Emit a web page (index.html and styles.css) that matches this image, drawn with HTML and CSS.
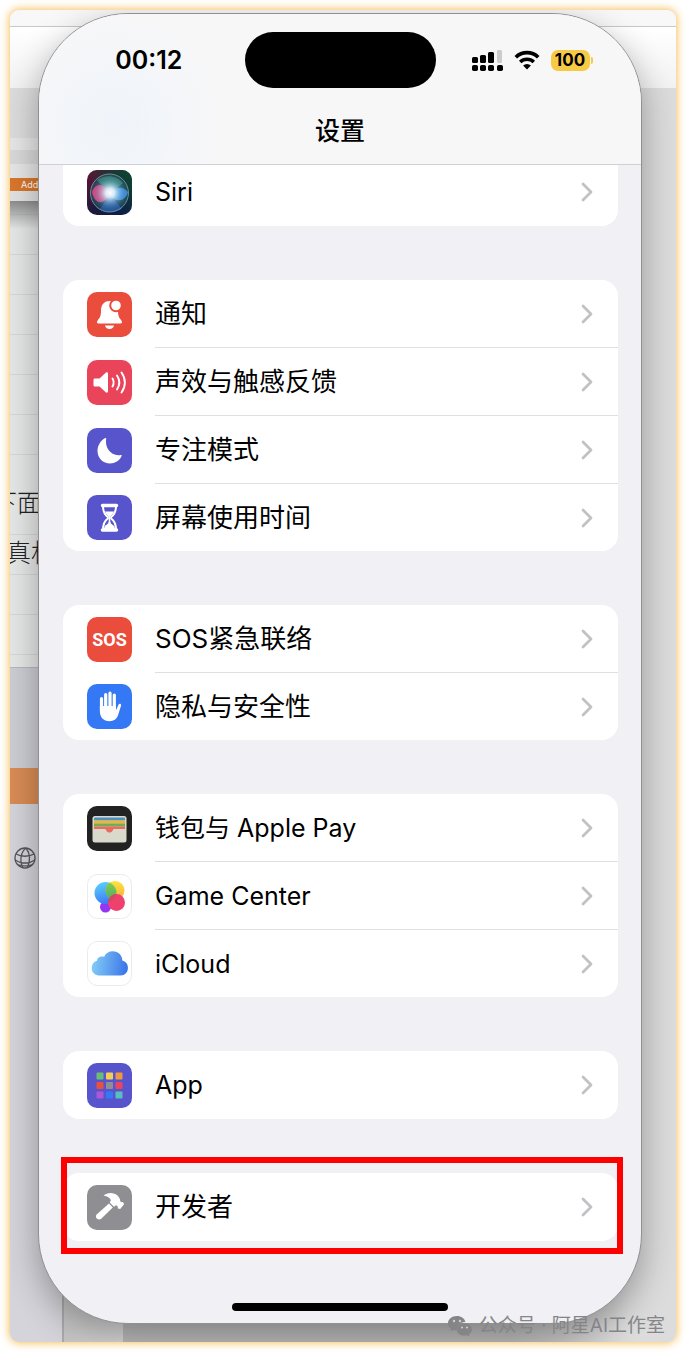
FILE: index.html
```html
<!DOCTYPE html>
<html lang="zh-CN">
<head>
    <meta charset="UTF-8">
    <meta name="viewport" content="width=device-width, initial-scale=1.0">
    <title>设置</title>
    <link rel="stylesheet" href="styles.css">
</head>
<body>
    <svg class="defs" width="0" height="0" aria-hidden="true">
        <defs>
            <radialGradient id="siri-glow" cx="50%" cy="52%" r="50%">
                <stop offset="0" stop-color="#fff"/>
                <stop offset=".25" stop-color="#e6f6ff" stop-opacity=".9"/>
                <stop offset=".55" stop-color="#a4d8ee" stop-opacity=".45"/>
                <stop offset="1" stop-color="#3c7a90" stop-opacity="0"/>
            </radialGradient>
            <linearGradient id="siri-bg" x1="0" y1="0" x2="1" y2="1">
                <stop offset="0" stop-color="#6a1233"/>
                <stop offset=".5" stop-color="#1c1a3c"/>
                <stop offset="1" stop-color="#0b1f4c"/>
            </linearGradient>
            <linearGradient id="siri-green" x1="1" y1="0" x2="0" y2="1">
                <stop offset="0" stop-color="#0c4a30"/>
                <stop offset=".6" stop-color="#0c4a30" stop-opacity="0"/>
            </linearGradient>
            <linearGradient id="gc-blue" x1="0" y1="0" x2=".3" y2="1">
                <stop offset="0" stop-color="#5ed8fa"/>
                <stop offset="1" stop-color="#3d7cf8"/>
            </linearGradient>
            <linearGradient id="gc-yellow" x1="0" y1="0" x2="0" y2="1">
                <stop offset="0" stop-color="#fbe638"/>
                <stop offset="1" stop-color="#f5a94a"/>
            </linearGradient>
            <linearGradient id="gc-green" x1="0" y1="0" x2="0" y2="1">
                <stop offset="0" stop-color="#86d048"/>
                <stop offset="1" stop-color="#4fae68"/>
            </linearGradient>
            <linearGradient id="cloud" x1="0" y1=".5" x2="1" y2=".6">
                <stop offset="0" stop-color="#83cdf6"/>
                <stop offset="1" stop-color="#3a74e8"/>
            </linearGradient>
            <clipPath id="gc-clip"><circle cx="18.500" cy="19" r="11"/></clipPath>
        </defs>
        <symbol id="chevron" viewBox="0 0 12 20">
            <path d="M2 2l8 8-8 8" fill="none" stroke="#c2c2c5" stroke-width="2.800" stroke-linecap="round" stroke-linejoin="round"/>
        </symbol>
    </svg>

    <div class="shot">
        <div class="desk">
            <div class="desk-titlebar"></div>
            <div class="desk-toolbar"></div>
            <div class="desk-tabs"></div>
            <div class="desk-add">Add</div>
            <div class="desk-edge"></div>
            <div class="desk-page">
                <p>下面</p>
                <p>真机</p>
            </div>
            <div class="desk-panel"></div>
            <div class="desk-orange"></div>
            <div class="desk-panel desk-panel-last">
                <svg width="22" height="22" viewBox="0 0 22 22" fill="none" stroke="#57575b" stroke-width="1.300" aria-hidden="true">
                    <circle cx="11" cy="11" r="10"/>
                    <path d="M12 1C7 5 5 13 9 21M12 1c4 5 5 13 1 20M2 7c5 3 13 3 18 0M1 13c6 4 14 4 20 0M4 18c4 1 10 1 14 0"/>
                </svg>
            </div>
        </div>

        <main class="phone">
            <header class="top">
                <div class="status">
                    <time class="clock">00:12</time>
                    <div class="island"></div>
                    <div class="signals">
                        <svg width="31" height="21" viewBox="0 0 31 21" aria-label="信号">
                            <g fill="#000">
                                <rect x="0" y="7" width="6" height="6" rx="1.500"/>
                                <rect x="8" y="5" width="6" height="8" rx="1.500"/>
                                <rect x="16" y="2" width="6" height="11" rx="1.500"/>
                                <rect x="0" y="15" width="6" height="6" rx="1.800"/>
                                <rect x="8" y="15" width="6" height="6" rx="1.800"/>
                                <rect x="16" y="15" width="6" height="6" rx="1.800"/>
                                <rect x="25" y="15" width="6" height="6" rx="1.800"/>
                            </g>
                            <rect x="25" y="0" width="5" height="13" rx="1.500" fill="#ccc"/>
                        </svg>
                        <svg width="26" height="20" viewBox="0 0 26 20" aria-label="无线局域网">
                            <path d="M1.800 7.200a16 16 0 0 1 22.400 0" fill="none" stroke="#000" stroke-width="3.700"/>
                            <path d="M6.200 12a9.800 9.800 0 0 1 13.600 0" fill="none" stroke="#000" stroke-width="3.500"/>
                            <path d="M13 19.500l-3.900-4a5.600 5.600 0 0 1 7.800 0z"/>
                        </svg>
                        <span class="battery">100</span>
                    </div>
                </div>
                <h1>设置</h1>
            </header>

            <nav class="list">
                <div class="card card-under">
                    <a class="row" href="#siri">
                        <svg class="icon" viewBox="0 0 45 45" aria-hidden="true">
                            <rect width="45" height="45" rx="10" fill="url(#siri-bg)"/>
                            <rect width="45" height="45" rx="10" fill="url(#siri-green)"/>
                            <circle cx="22.500" cy="23" r="19" fill="#28596e" opacity=".6"/>
                            <path d="M10 10c8-6 20-5 26 3L23 24z" fill="#3e9b85" opacity=".6"/>
                            <path d="M23 24l12 15c-8 4-16 4-22 0z" fill="#2c66c8" opacity=".6"/>
                            <path d="M23 24C18 12 8 13 5 22c2 12 12 14 18 2z" fill="#e84583" opacity=".9"/>
                            <path d="M22 24c6-8 14-8 19-2-2 9-12 12-19 2z" fill="#3f8fe8" opacity=".9"/>
                            <circle cx="23" cy="22" r="18" fill="url(#siri-glow)"/>
                            <circle cx="22.500" cy="23" r="19" fill="none" stroke="#7aa89e" stroke-width="1" opacity=".8"/>
                        </svg>
                        <span class="label">Siri</span>
                        <svg class="chevron" aria-hidden="true"><use href="#chevron"/></svg>
                    </a>
                </div>

                <div class="card">
                    <a class="row" href="#notifications">
                        <svg class="icon" viewBox="0 0 45 45" aria-hidden="true">
                            <rect width="45" height="45" rx="10" fill="#eb4d3d"/>
                            <path d="M22.500 9c-6 0-8.500 4.500-8.500 9.500 0 6.500-1.500 7.500-3.400 10-1.200 1.700-.6 3 1 3h21.800c1.600 0 2.200-1.300 1-3-1.900-2.500-3.400-3.500-3.400-10 0-5-2.500-9.500-8.500-9.500z" fill="#fff"/>
                            <path d="M18 33.500h9c-.5 2.300-2 3.500-4.500 3.500s-4-1.200-4.500-3.500z" fill="#fff"/>
                            <circle cx="29" cy="13.500" r="5.800" fill="#fff" stroke="#eb4d3d" stroke-width="2"/>
                        </svg>
                        <span class="label label-zh">通知</span>
                        <svg class="chevron" aria-hidden="true"><use href="#chevron"/></svg>
                    </a>
                    <a class="row" href="#sounds">
                        <svg class="icon" viewBox="0 0 45 45" aria-hidden="true">
                            <rect width="45" height="45" rx="10" fill="#ea445a"/>
                            <path d="M8 18.500h4.500l6.200-5.700c1-.9 2.300-.5 2.300.9v17.600c0 1.400-1.300 1.800-2.300.9l-6.200-5.700H8c-1 0-1.500-.5-1.500-1.500v-5c0-1 .5-1.500 1.500-1.500z" fill="#fff"/>
                            <path d="M25.500 18.500a8 8 0 0 1 0 8M30 15.500c3 4.500 3 9.500 0 14M34.500 12.500c4.500 6 4.500 14 0 20" fill="none" stroke="#fff" stroke-width="1.900" stroke-linecap="round"/>
                        </svg>
                        <span class="label label-zh">声效与触感反馈</span>
                        <svg class="chevron" aria-hidden="true"><use href="#chevron"/></svg>
                    </a>
                    <a class="row" href="#focus">
                        <svg class="icon" viewBox="0 0 45 45" aria-hidden="true">
                            <rect width="45" height="45" rx="10" fill="#5854cb"/>
                            <path d="M19.200 10.600C17.500 20 24 28.500 33.700 27c.8-.1 1.200.3.900 1C32.500 32.700 28 35.500 23 35.500c-7 0-12.500-5.500-12.500-12.500 0-5.500 3-10.500 7.800-13 .7-.3 1.100 0 .9.600z" fill="#fff"/>
                        </svg>
                        <span class="label label-zh">专注模式</span>
                        <svg class="chevron" aria-hidden="true"><use href="#chevron"/></svg>
                    </a>
                    <a class="row" href="#screen-time">
                        <svg class="icon" viewBox="0 0 45 45" aria-hidden="true">
                            <rect width="45" height="45" rx="10" fill="#5854cb"/>
                            <path d="M15.500 10.500h14M15.500 35h14" stroke="#fff" stroke-width="3.500" stroke-linecap="round"/>
                            <path d="M16 11c0 6 1.500 8.500 4.800 11v1.500c-3.300 2.500-4.800 5.500-4.800 11h13c0-5.500-1.500-8.500-4.800-11V22c3.300-2.500 4.800-5 4.800-11z" fill="none" stroke="#fff" stroke-width="2"/>
                            <path d="M18 16.500h9c-.8 2-2 3.500-3.700 5v5c.8 2 2.800 3.500 4 4.500l.7 3.500H17l.7-3.500c1.200-1 3.200-2.500 4-4.500v-5c-1.700-1.500-2.900-3-3.700-5z" fill="#fff"/>
                            <path d="M17.800 30.500c.5-2 1.700-3.300 3.400-4.500v2.300zM27.200 30.500c-.5-2-1.700-3.300-3.400-4.500v2.300z" fill="#5854cb"/>
                        </svg>
                        <span class="label label-zh">屏幕使用时间</span>
                        <svg class="chevron" aria-hidden="true"><use href="#chevron"/></svg>
                    </a>
                </div>

                <div class="card">
                    <a class="row" href="#sos">
                        <span class="icon icon-sos" aria-hidden="true">SOS</span>
                        <span class="label label-zh">SOS紧急联络</span>
                        <svg class="chevron" aria-hidden="true"><use href="#chevron"/></svg>
                    </a>
                    <a class="row" href="#privacy">
                        <svg class="icon" viewBox="0 0 45 45" aria-hidden="true">
                            <rect width="45" height="45" rx="10" fill="#3478f6"/>
                            <path d="M14.500 14.500V27M18.700 10.500V24M23 9V24M27.300 11V25" stroke="#fff" stroke-width="3.200" stroke-linecap="round"/>
                            <path d="M12.900 22h16v4.500l2.700-6c.6-1.300 2.900-.8 2.500.9l-3 9.600c-1.500 4.300-4.300 6.200-8.600 6.200-6.200 0-9.600-4.200-9.600-9.700z" fill="#fff"/>
                        </svg>
                        <span class="label label-zh">隐私与安全性</span>
                        <svg class="chevron" aria-hidden="true"><use href="#chevron"/></svg>
                    </a>
                </div>

                <div class="card">
                    <a class="row" href="#wallet">
                        <svg class="icon" viewBox="0 0 45 45" aria-hidden="true">
                            <rect width="45" height="45" rx="10" fill="#222"/>
                            <rect x="5.500" y="10" width="34" height="26.500" rx="2.500" fill="#d9d9cc"/>
                            <rect x="7" y="11.500" width="31" height="3" rx="1" fill="#4c90c2"/>
                            <rect x="7" y="14.500" width="31" height="3" fill="#efb43b"/>
                            <rect x="7" y="17.500" width="31" height="3" fill="#72ad4f"/>
                            <path d="M7 20.500h31V23H27.500c-1 0-1.300.6-1.800 1.400-.8 1.300-1.800 2.100-3.200 2.100s-2.400-.8-3.200-2.100c-.5-.8-.8-1.400-1.800-1.400H7z" fill="#ec6b5f"/>
                        </svg>
                        <span class="label">钱包与 Apple Pay</span>
                        <svg class="chevron" aria-hidden="true"><use href="#chevron"/></svg>
                    </a>
                    <a class="row" href="#game-center">
                        <svg class="icon" viewBox="0 0 45 45" aria-hidden="true">
                            <rect x=".5" y=".5" width="44" height="44" rx="10" fill="#fff" stroke="#ebebed"/>
                            <circle cx="18.500" cy="33" r="5.500" fill="#9436f2"/>
                            <circle cx="18.500" cy="19" r="11" fill="url(#gc-blue)"/>
                            <circle cx="28" cy="16.500" r="9.500" fill="url(#gc-yellow)"/>
                            <circle cx="28" cy="16.500" r="9.500" fill="url(#gc-green)" clip-path="url(#gc-clip)"/>
                            <circle cx="29.500" cy="28.500" r="8.500" fill="#ee416e"/>
                            <path d="M21.200 28a8.500 8.500 0 0 1 8.200-8A11 11 0 0 1 21.200 28z" fill="#d04a62"/>
                        </svg>
                        <span class="label">Game Center</span>
                        <svg class="chevron" aria-hidden="true"><use href="#chevron"/></svg>
                    </a>
                    <a class="row" href="#icloud">
                        <svg class="icon" viewBox="0 0 45 45" aria-hidden="true">
                            <rect x=".5" y=".5" width="44" height="44" rx="10" fill="#fff" stroke="#ebebed"/>
                            <path d="M13 34.500c-4.800 0-8.300-3-8.300-7.600 0-3.600 2-6.200 5.200-7.200.2-3 3-5 7.200-4 1.700-3.500 4.800-5.400 8.600-5.400 5.500 0 9.400 3.900 9.700 9.200 3.300.8 5.500 3.500 5.500 7.300 0 4.600-3 7.700-7.300 7.700z" fill="url(#cloud)"/>
                        </svg>
                        <span class="label">iCloud</span>
                        <svg class="chevron" aria-hidden="true"><use href="#chevron"/></svg>
                    </a>
                </div>

                <div class="card">
                    <a class="row" href="#apps">
                        <svg class="icon" viewBox="0 0 45 45" aria-hidden="true">
                            <rect width="45" height="45" rx="10" fill="#5854cb"/>
                            <rect x="9.500" y="9.500" width="7" height="7" rx="1" fill="#68bf73"/>
                            <rect x="19" y="9.500" width="7" height="7" rx="1" fill="#f2cd57"/>
                            <rect x="28.500" y="9.500" width="7" height="7" rx="1" fill="#ef9840"/>
                            <rect x="9.500" y="19" width="7" height="7" rx="1" fill="#e9503f"/>
                            <rect x="19" y="19" width="7" height="7" rx="1" fill="#8e8e93"/>
                            <rect x="28.500" y="19" width="7" height="7" rx="1" fill="#ea4560"/>
                            <rect x="9.500" y="28.500" width="7" height="7" rx="1" fill="#a958d8"/>
                            <rect x="19" y="28.500" width="7" height="7" rx="1" fill="#3478f6"/>
                            <rect x="28.500" y="28.500" width="7" height="7" rx="1" fill="#57c2bd"/>
                        </svg>
                        <span class="label">App</span>
                        <svg class="chevron" aria-hidden="true"><use href="#chevron"/></svg>
                    </a>
                </div>

                <div class="card marked">
                    <a class="row" href="#developer">
                        <svg class="icon" viewBox="0 0 45 45" aria-hidden="true">
                            <rect width="45" height="45" rx="10" fill="#8e8e93"/>
                            <path d="M22 18.500l3.800 4L14.200 33.800c-1.400 1.200-3.200.9-4.400-.3-1.200-1.300-1.200-3 .1-4.300z" fill="#fff"/>
                            <path d="M16.500 10.500c4-3.500 10.500-3.500 14.200.2 1.800 1.800 2.600 3.800 2.500 5.500l1.300 1 1.300-.3 1.400 2-4 5-2.300-.5-.3-2.200-1.600-1-2 1.600-4.300-4.300 1.200-2.300c-.8-2.500-3.500-4-7.400-4.700z" fill="#fff"/>
                        </svg>
                        <span class="label label-zh">开发者</span>
                        <svg class="chevron" aria-hidden="true"><use href="#chevron"/></svg>
                    </a>
                </div>
            </nav>
            <div class="home-bar"></div>
        </main>

        <div class="watermark">
            <svg width="26" height="22" viewBox="0 0 26 22" aria-hidden="true">
                <path d="M10 1C4.500 1 1 4.400 1 8.300c0 2.300 1.200 4.300 3.200 5.600l-.8 2.600 3-1.500c1 .3 2.100.5 3.300.5-.8-4.600 3-8.500 8.700-8.500C17.600 3.500 14.300 1 10 1z"/>
                <path d="M17.500 8.200c-4.400 0-7.800 2.800-7.800 6.200s3.400 6.200 7.800 6.200c.9 0 1.800-.1 2.600-.4l2.500 1.300-.7-2.200c1.900-1.200 3.100-2.900 3.100-4.900 0-3.400-3.200-6.200-7.500-6.200z"/>
                <g fill="#d0d0d2"><circle cx="7" cy="6" r="1.200"/><circle cx="13" cy="6" r="1.200"/><circle cx="15" cy="12.500" r="1"/><circle cx="20" cy="12.500" r="1"/></g>
            </svg>
            <span>公众号 · 阿星AI工作室</span>
        </div>
    </div>
</body>
</html>
```
FILE: styles.css
```css
:root {
    --ink: #000;
    --bg: #f0f0f5;
    --card: #fff;
    --line: #dfdfe2;
    --mark: #fe0000;
    --orange: #d9772c;
}
* { box-sizing: border-box; }
body {
    margin: 0;
    padding: 10px;
    background: #fff;
    color: var(--ink);
    font-family: Inter, "Noto Sans CJK SC", sans-serif;
}
.defs {
    position: absolute;
}
.shot {
    display: grid;
    position: relative;
    border-radius: 9px;
    overflow: hidden;
}
body::before {
    content: '';
    position: absolute;
    inset: 10px;
    border-radius: 9px;
    box-shadow: 0 0 9px 1px #f6bf5c;
}
.desk, .phone {
    grid-area: 1 / 1;
}

/* windows behind the phone */
.desk {
    display: flex;
    flex-direction: column;
    background: #dcdcdd;
}
.desk-titlebar {
    height: 17px;
    background: #f8f8f8;
    border-bottom: 1px solid #c8c8c8;
}
.desk-toolbar {
    height: 61px;
    background: linear-gradient(#fff, #f2f2f2);
}
.desk-tabs {
    height: 90px;
    width: 28px;
    background: linear-gradient(#dcdcdc 50px, #e6e6e6 50px, #e6e6e6 62px, #d9d9d9 62px, #d9d9d9 76px, #e6e6e6 76px);
}
.desk-add {
    height: 13px;
    width: 28px;
    padding-left: 11px;
    background: var(--orange);
    color: #fff;
    font-size: 9px;
    line-height: 13px;
}
.desk-edge {
    height: 10px;
    width: 28px;
    background: #e2e2e2;
}
.desk-page {
    height: 467px;
    width: 28px;
    padding-top: 277px;
    overflow: hidden;
    background:
        linear-gradient(#8c8c8c, rgba(140,140,140,0) 28px),
        repeating-linear-gradient(transparent 0 13px, #d6d8d8 13px 14px, transparent 14px 40px),
        #e6e7e7;
    border-bottom: 1px solid #b8b8bc;
}
.desk-page p {
    margin: 0;
    margin-left: -18px;
    white-space: nowrap;
    font-size: 25px;
    font-weight: 300;
    line-height: 50px;
    color: #222;
}
.desk-page p + p {
    margin-left: -4px;
}
.desk-panel {
    height: 100px;
    width: 28px;
    background: #cdcdd4;
}
.desk-orange {
    height: 36px;
    width: 28px;
    background: #d98c55;
}
.desk-panel-last {
    flex: 1;
    width: 100%;
    padding: 43px 4px 0;
    background: linear-gradient(90deg, #d4d4da 52px, #aaa 52px, #aaa 54px, #c4c4c4 54px, #dadada 113px, #bcbcbc 113px, #bcbcbc 500px, #dcdcdd 620px);
}

.phone {
    display: flex;
    flex-direction: column;
    margin: 3px 34px 18px 28px;
    background: var(--bg);
    border: 1px solid #909093;
    border-radius: 90px;
    overflow: hidden;
    box-shadow: 0 12px 34px rgba(0,0,0,0.32);
}
.top {
    position: relative;
    z-index: 1;
    height: 151px;
    background: radial-gradient(circle at 75px 110px, #eff4fa, #f7f7f8 110px);
    border-bottom: 1px solid #d0d0d3;
}
.status {
    display: grid;
    grid-template-columns: 1fr 191px 1fr;
    align-items: center;
    padding-top: 18px;
}
.clock {
    justify-self: center;
    padding-left: 14px;
    font-size: 25px;
    font-weight: 600;
}
.island {
    height: 56px;
    border-radius: 28px;
    background: #000;
}
.signals {
    display: flex;
    align-items: center;
    gap: 11px;
    padding-left: 36px;
}
.battery {
    position: relative;
    width: 39px;
    border-radius: 7px;
    background: #f7ca45;
    font-size: 17px;
    font-weight: 700;
    line-height: 21px;
    text-align: center;
}
.battery::after {
    content: '';
    position: absolute;
    top: 7px;
    right: -3px;
    width: 2px;
    height: 7px;
    border-radius: 0 2px 2px 0;
    background: #f7ca45;
}
h1 {
    margin: 23px 0 0;
    font-size: 25px;
    font-weight: 500;
    line-height: 40px;
    text-align: center;
}
.list {
    display: flex;
    flex-direction: column;
    gap: 54px;
    margin-top: -7px;
    padding: 0 23px 0 24px;
}
.card {
    background: var(--card);
    border-radius: 16px;
}
/* scrolled half under the header */
.card-under {
    border-radius: 0 0 16px 16px;
}
.row {
    display: flex;
    align-items: center;
    height: 68px;
    padding-left: 24px;
    color: var(--ink);
    text-decoration: none;
}
.row:last-child:not(:first-child) {
    height: 67px;
}
.icon {
    flex: none;
    width: 45px;
    height: 45px;
    margin-right: 23px;
}
.icon-sos {
    border-radius: 10px;
    background: #eb4d3d;
    color: #fff;
    font-family: Roboto, sans-serif;
    font-size: 18px;
    font-weight: 700;
    line-height: 45px;
    text-align: center;
}
.label {
    flex: 1;
    font-size: 25px;
    line-height: 36px;
    white-space: pre;
}
.label-zh {
    font-size: 26px;
}
.row .chevron {
    width: 12px;
    height: 20px;
    margin-right: 25px;
}
.row:not(:last-child) {
    background: linear-gradient(var(--line), var(--line)) right bottom / calc(100% - 92px) 1px no-repeat;
}

/* red frame round the row to tap */
.marked {
    position: relative;
}
.marked::after {
    content: '';
    position: absolute;
    inset: -16px -5px -13px -2px;
    border: 6px solid var(--mark);
    pointer-events: none;
}
.home-bar {
    width: 216px;
    height: 8px;
    margin: 62px auto 12px;
    border-radius: 4px;
    background: #000;
}
.watermark {
    position: absolute;
    right: 11px;
    bottom: 3px;
    display: flex;
    align-items: center;
    gap: 6px;
    color: #858588;
    font-size: 19px;
    line-height: 26px;
}
.watermark svg {
    fill: #858588;
}
```
